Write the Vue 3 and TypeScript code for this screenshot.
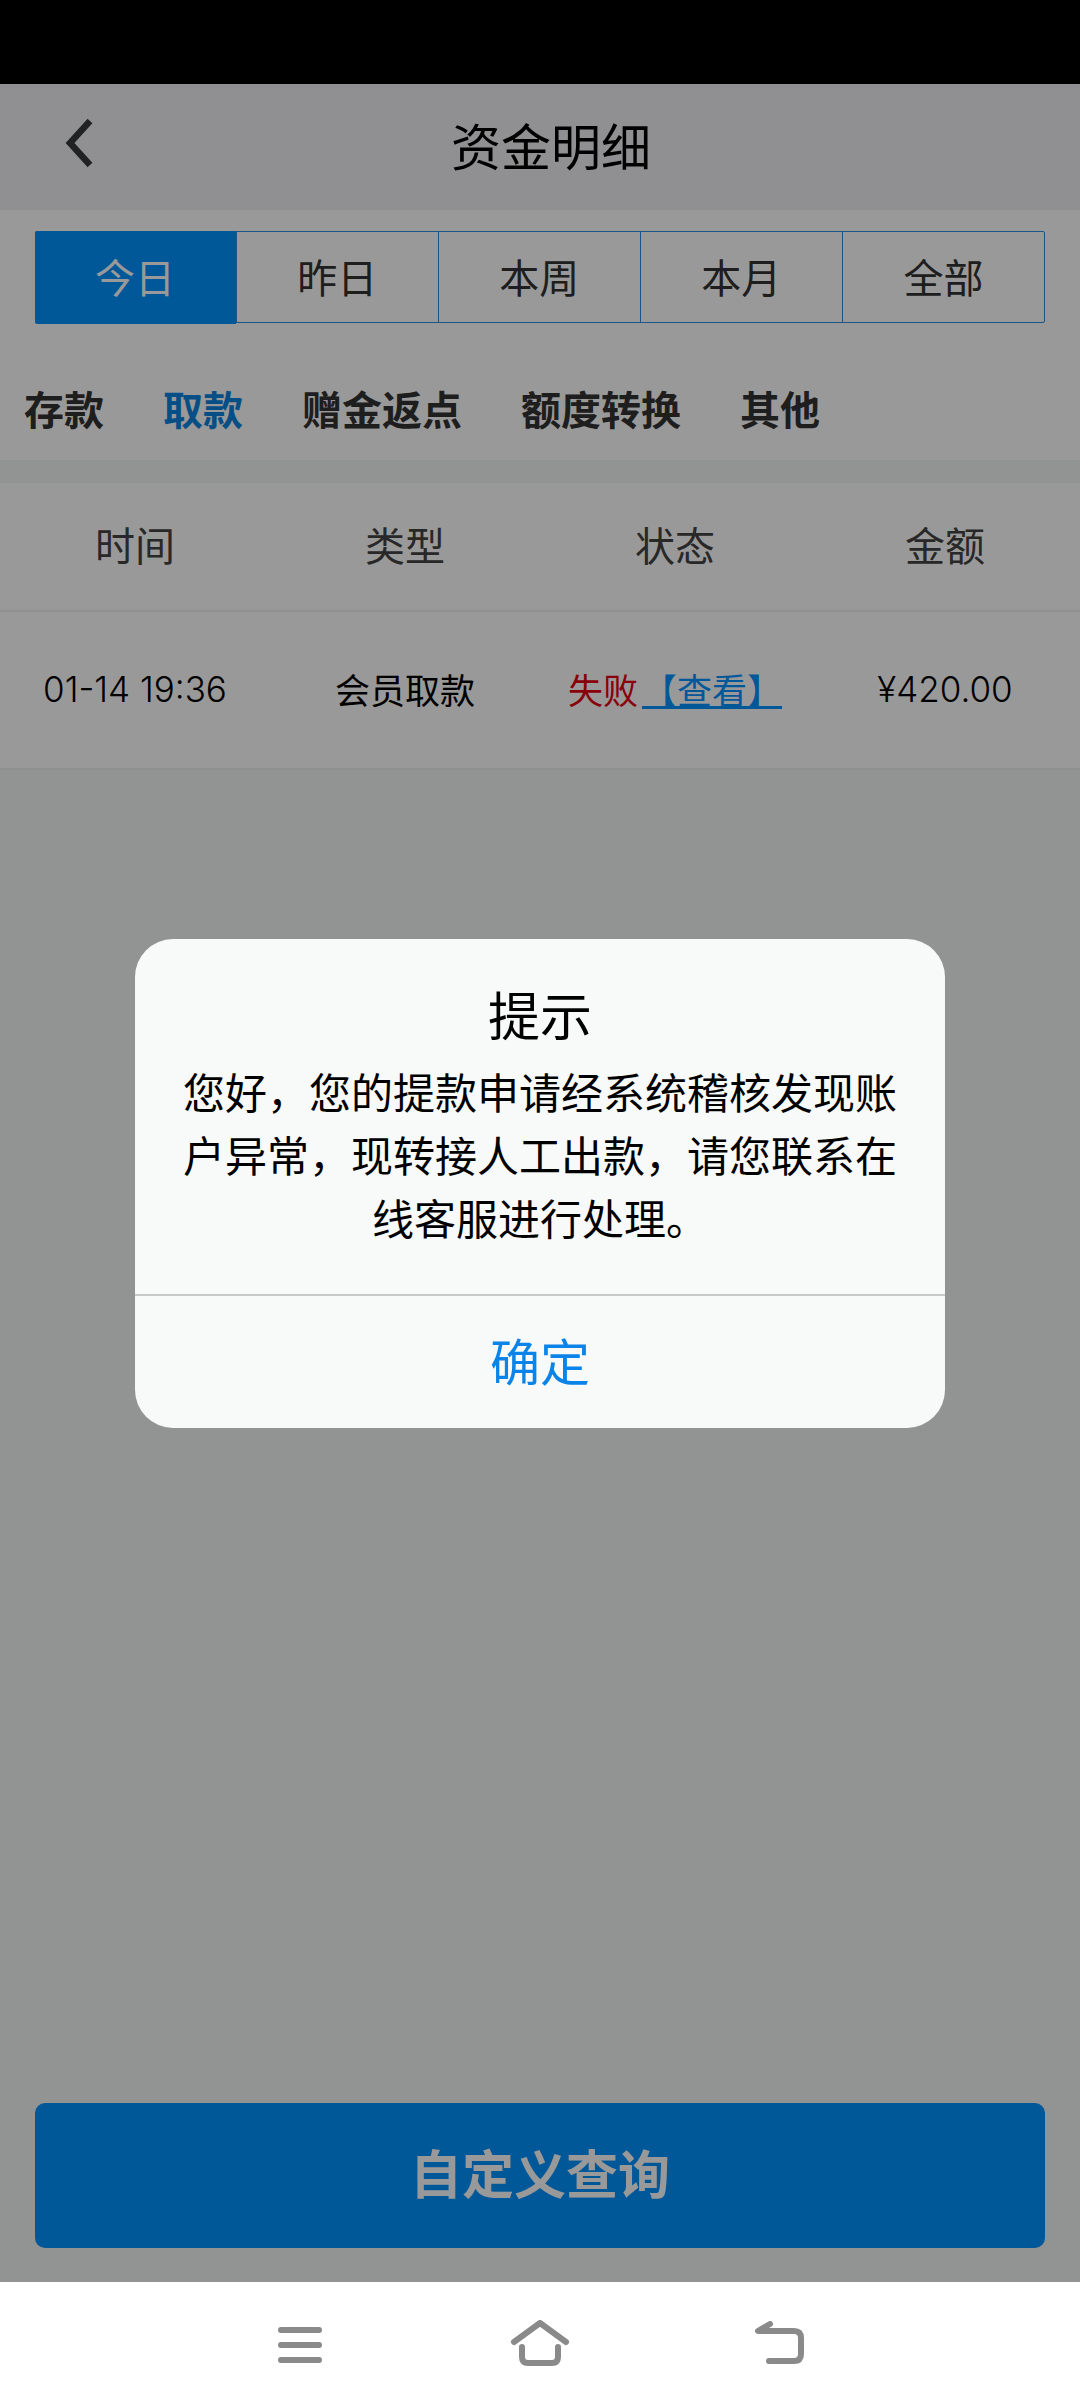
<script setup lang="ts">
import { ref } from 'vue';

const ranges = ['今日', '昨日', '本周', '本月', '全部'];
const types = ['存款', '取款', '赠金返点', '额度转换', '其他'];
const columns = ['时间', '类型', '状态', '金额'];

const activeRange = ref(0);
const activeType = ref(1);
</script>

<template>
  <div class="screen">
    <div class="status-bar"></div>

    <div class="page">
      <header class="header">
        <svg class="back" width="40" height="56" viewBox="0 0 40 56" fill="none">
          <path d="M31 6 L11 28 L31 50" stroke="#383a3c" stroke-width="6.5" />
        </svg>
        <h1 class="title">资金明细</h1>
      </header>

      <section class="filters">
        <div class="ranges">
          <div
            v-for="(item, i) in ranges"
            :key="item"
            class="range"
            :class="{ 'range--active': i === activeRange }"
          >{{ item }}</div>
        </div>
        <div class="types">
          <span
            v-for="(item, i) in types"
            :key="item"
            class="type"
            :class="{ 'type--active': i === activeType }"
          >{{ item }}</span>
        </div>
      </section>

      <section class="table">
        <div class="row row--head">
          <div v-for="col in columns" :key="col" class="cell">{{ col }}</div>
        </div>
        <div class="row row--body">
          <div class="cell num">01-14 19:36</div>
          <div class="cell">会员取款</div>
          <div class="cell">
            <span class="failed">失败</span>
            <a class="view">【查看】</a>
          </div>
          <div class="cell num">¥420.00</div>
        </div>
      </section>

      <div class="footer">
        <button class="query">自定义查询</button>
      </div>

      <div class="overlay">
        <div class="dialog">
          <div class="dialog-body">
            <div class="dialog-title">提示</div>
            <p class="dialog-text">您好，您的提款申请经系统稽核发现账户异常，现转接人工出款，请您联系在线客服进行处理。</p>
          </div>
          <div class="dialog-action">确定</div>
        </div>
      </div>
    </div>

    <nav class="nav">
      <svg class="nav-icon" width="44" height="36" viewBox="0 0 44 36" fill="none">
        <path d="M3 3 H41 M3 18 H41 M3 33 H41" stroke="#8a8a8a" stroke-width="6" stroke-linecap="round" />
      </svg>
      <svg class="nav-icon" width="60" height="46" viewBox="0 0 60 46" fill="none">
        <path d="M4 22 L30 3 L56 22" stroke="#8a8a8a" stroke-width="6" stroke-linecap="round" stroke-linejoin="round" />
        <path d="M12 27 V37 Q12 43 18 43 H42 Q48 43 48 37 V27" stroke="#8a8a8a" stroke-width="6" stroke-linecap="round" />
      </svg>
      <svg class="nav-icon" width="50" height="44" viewBox="0 0 50 44" fill="none">
        <path d="M15 3 L3 10 H39 Q46 10 46 17 V33 Q46 40 39 40 H14" stroke="#8a8a8a" stroke-width="6" stroke-linecap="round" stroke-linejoin="round" />
      </svg>
    </nav>
  </div>
</template>

<style>
html,
body {
  margin: 0;
  padding: 0;
  background: #fff;
}
</style>

<style scoped>
.screen {
  display: flex;
  flex-direction: column;
  width: 1080px;
  height: 2408px;
  overflow: hidden;
  font-family: "Noto Sans CJK SC", "Noto Sans", sans-serif;
}

.status-bar {
  height: 84px;
  flex: none;
  background: #000;
}

.page {
  position: relative;
  flex: 1;
  display: flex;
  flex-direction: column;
  background: #f4f6f6;
}

/* Header */
.header {
  position: relative;
  display: flex;
  align-items: center;
  justify-content: center;
  height: 126px;
  flex: none;
  padding-left: 22px;
  padding-bottom: 7px;
  box-sizing: border-box;
  background: #f0f1f3;
}

.back {
  position: absolute;
  left: 59px;
  top: 31px;
}

.title {
  margin: 0;
  font-size: 50px;
  font-weight: 400;
  color: #000;
}

/* Filters */
.filters {
  height: 250px;
  flex: none;
  box-sizing: border-box;
  padding-top: 21px;
  background: #fff;
}

.ranges {
  display: flex;
  height: 92px;
  margin: 0 35px;
  box-sizing: border-box;
  border: 1.5px solid #2a8ee0;
  border-radius: 2px;
}

.range {
  flex: 1;
  display: flex;
  align-items: center;
  justify-content: center;
  padding-bottom: 2px;
  box-sizing: border-box;
  font-size: 40px;
  color: #333;
  border-left: 1.5px solid #2a8ee0;
}

.range:first-child {
  border-left: none;
}

.range--active {
  background: #0093ff;
  color: #fff;
  margin: -1.5px 0 -1.5px -1.5px;
  border-radius: 2px 0 0 2px;
}

.types {
  display: flex;
  gap: 59px;
  padding: 60px 0 0 24px;
}

.type {
  font-size: 40px;
  line-height: 50px;
  font-weight: 700;
  color: #333;
}

.type--active {
  color: #0a84e0;
}

/* Table */
.table {
  flex: none;
  margin-top: 23px;
  background: #fff;
  border-bottom: 2px solid #eef0f0;
}

.row {
  display: grid;
  grid-template-columns: repeat(4, 1fr);
  align-items: center;
  text-align: center;
}

.row--head {
  height: 129px;
  padding-bottom: 5px;
  box-sizing: border-box;
  font-size: 40px;
  color: #444;
  border-bottom: 2px solid #eef0f0;
}

.row--body {
  height: 156px;
  padding-bottom: 3px;
  box-sizing: border-box;
  font-size: 35px;
  color: #000;
}

.num {
  font-family: "Inter", "Noto Sans CJK SC", sans-serif;
  font-size: 35px;
  font-weight: 300;
}

.failed {
  color: #e60012;
}

.view {
  color: #0093ff;
  text-decoration: underline;
  margin-left: 4px;
}

/* Bottom button */
.footer {
  margin-top: auto;
  padding: 0 35px 34px;
}

.query {
  display: block;
  width: 100%;
  height: 145px;
  padding: 0 0 8px;
  border: none;
  border-radius: 10px;
  background: #0093ff;
  color: #fff;
  font-family: inherit;
  font-size: 52px;
  font-weight: 700;
}

/* Alert */
.overlay {
  position: absolute;
  inset: 0;
  display: flex;
  align-items: center;
  justify-content: center;
  background: rgba(0, 0, 0, 0.4);
}

.dialog {
  width: 810px;
  height: 489px;
  display: flex;
  flex-direction: column;
  border-radius: 38px;
  background: #f8fafa;
  overflow: hidden;
}

.dialog-body {
  height: 357px;
  flex: none;
  box-sizing: border-box;
  padding: 39px 46px 0;
  border-bottom: 2px solid #c8c8c8;
  text-align: center;
}

.dialog-title {
  font-size: 52px;
  line-height: 72px;
  color: #000;
}

.dialog-text {
  margin: 9px 0 0;
  font-size: 42px;
  line-height: 63px;
  color: #000;
}

.dialog-action {
  flex: 1;
  display: flex;
  align-items: center;
  justify-content: center;
  padding-bottom: 5px;
  font-size: 50px;
  color: #0a84e8;
}

/* System navigation */
.nav {
  position: relative;
  height: 126px;
  flex: none;
  background: #fff;
}

.nav-icon {
  position: absolute;
}

.nav-icon:nth-child(1) {
  left: 278px;
  top: 45px;
}

.nav-icon:nth-child(2) {
  left: 510px;
  top: 38px;
}

.nav-icon:nth-child(3) {
  left: 755px;
  top: 39px;
}
</style>
